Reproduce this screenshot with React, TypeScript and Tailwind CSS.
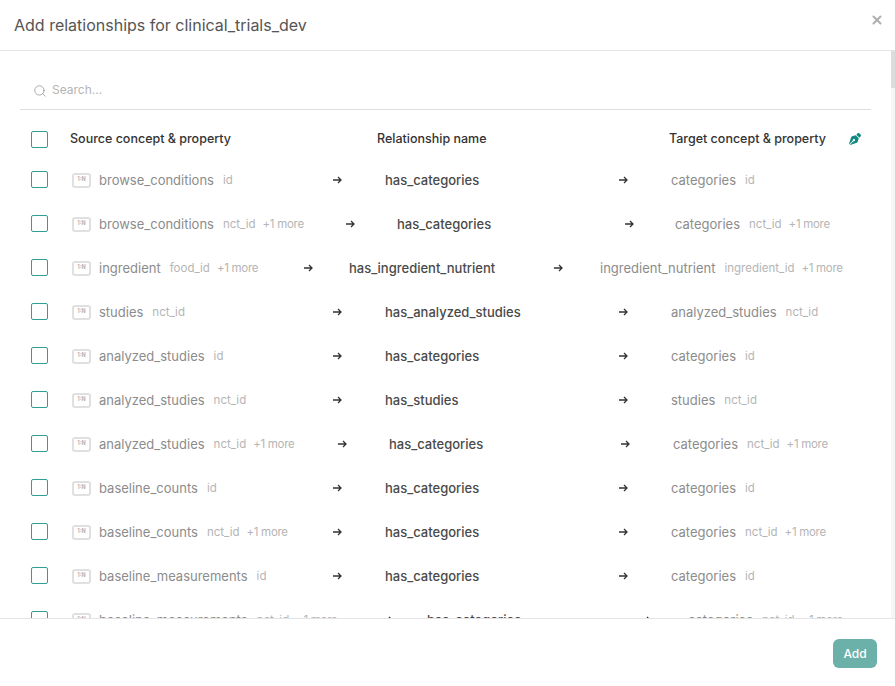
import { Search, X } from "lucide-react";
import { FaPenNib } from "react-icons/fa";

type Row = {
  src: string;
  srcProp: string;
  more?: boolean;
  name: string;
  tgt: string;
  tgtProp: string;
  tgtMore?: boolean;
  c1: string;
  c2: string;
  c3: string;
  c4: string;
};

const base = { c1: "w-[261px]", c2: "w-[52px]", c3: "w-[234px]", c4: "w-[52px]" };

const rows: Row[] = [
  { src: "browse_conditions", srcProp: "id", name: "has_categories", tgt: "categories", tgtProp: "id", ...base },
  { src: "browse_conditions", srcProp: "nct_id", more: true, name: "has_categories", tgt: "categories", tgtProp: "nct_id", tgtMore: true, c1: "w-[274px]", c2: "w-[51px]", c3: "w-[228px]", c4: "w-[50px]" },
  { src: "ingredient", srcProp: "food_id", more: true, name: "has_ingredient_nutrient", tgt: "ingredient_nutrient", tgtProp: "ingredient_id", tgtMore: true, c1: "w-[232px]", c2: "w-[45px]", c3: "w-[205px]", c4: "w-[46px]" },
  { src: "studies", srcProp: "nct_id", name: "has_analyzed_studies", tgt: "analyzed_studies", tgtProp: "nct_id", ...base },
  { src: "analyzed_studies", srcProp: "id", name: "has_categories", tgt: "categories", tgtProp: "id", ...base },
  { src: "analyzed_studies", srcProp: "nct_id", name: "has_studies", tgt: "studies", tgtProp: "nct_id", ...base },
  { src: "analyzed_studies", srcProp: "nct_id", more: true, name: "has_categories", tgt: "categories", tgtProp: "nct_id", tgtMore: true, c1: "w-[266px]", c2: "w-[51px]", c3: "w-[232px]", c4: "w-[52px]" },
  { src: "baseline_counts", srcProp: "id", name: "has_categories", tgt: "categories", tgtProp: "id", ...base },
  { src: "baseline_counts", srcProp: "nct_id", more: true, name: "has_categories", tgt: "categories", tgtProp: "nct_id", tgtMore: true, ...base },
  { src: "baseline_measurements", srcProp: "id", name: "has_categories", tgt: "categories", tgtProp: "id", ...base },
  { src: "baseline_measurements", srcProp: "nct_id", more: true, name: "has_categories", tgt: "categories", tgtProp: "nct_id", tgtMore: true, c1: "w-[312px]", c2: "w-[43px]", c3: "w-[215px]", c4: "w-[46px]" },
];

function Arrow() {
  return (
    <svg width="9" height="8" viewBox="0 0 9 8" fill="none" stroke="#333333" strokeWidth="1.3">
      <path d="M0 4H8M5 1l3 3-3 3" />
    </svg>
  );
}

function Meta({ prop, more }: { prop: string; more?: boolean }) {
  return (
    <>
      <span className="ml-[9px] translate-y-px text-[11.5px] text-[#b5b5b5]">{prop}</span>
      {more && <span className="ml-[7px] translate-y-px text-[11.5px] text-[#b5b5b5] tracking-[-0.3px]">+1 more</span>}
    </>
  );
}

function RowView({ r }: { r: Row }) {
  return (
    <div className="flex h-[44px] shrink-0 items-start pl-[11px]">
      <div className="mt-[13px] h-[17px] w-[17px] shrink-0 rounded-[2px] border border-current bg-white text-[#2f9e94]" />
      <div className="ml-[24px] flex h-full items-center whitespace-nowrap">
        <div className={`${r.c1} flex items-center`}>
          <div className="flex h-[15px] w-[19px] shrink-0 items-center justify-center rounded-[3px] border-2 border-[#e0e0e0] text-[5.5px] font-bold leading-none text-[#b5b5b5]">
            1:N
          </div>
          <span className="ml-[8px] translate-y-px text-[13px] text-[#8c8c8c]">{r.src}</span>
          <Meta prop={r.srcProp} more={r.more} />
        </div>
        <div className={`${r.c2} flex items-center`}>
          <Arrow />
        </div>
        <div className={`${r.c3} translate-y-px text-[13px] font-medium text-[#4a4a4a]`}>{r.name}</div>
        <div className={`${r.c4} flex items-center`}>
          <Arrow />
        </div>
        <div className="flex items-center">
          <span className="translate-y-px text-[13px] text-[#8c8c8c]">{r.tgt}</span>
          <Meta prop={r.tgtProp} more={r.tgtMore} />
        </div>
      </div>
    </div>
  );
}

export default function App() {
  return (
    <div className="flex h-[686px] w-[895px] flex-col overflow-hidden bg-white font-['Inter','Liberation_Sans',sans-serif]">
      <header className="flex h-[51px] shrink-0 items-start justify-between border-b border-[#e4e4e4] pl-[14px] pr-[11px]">
        <h1 className="mt-[15px] text-[16px] leading-5 font-normal text-[#555555]">Add relationships for clinical_trials_dev</h1>
        <X size={14} strokeWidth={3.5} className="mt-[13px] text-[#b0b0b0]" />
      </header>
      <div className="flex min-h-0 flex-1">
        <main className="flex min-w-0 flex-1 flex-col overflow-hidden pl-[20px] pr-[20px] pt-[22px]">
          <div className="flex h-[37px] shrink-0 items-center border-b border-[#dedede] pl-[13px]">
            <Search size={14} strokeWidth={1.25} className="text-[#8c8c8c]" />
            <span className="ml-[5px] -translate-y-px text-[12px] text-[#b5b5b5]">Search...</span>
          </div>
          <div className="mt-[10px] flex h-[38px] shrink-0 items-start pl-[11px]">
            <div className="mt-[11px] h-[17px] w-[17px] shrink-0 rounded-[2px] border border-current bg-white text-[#2f9e94]" />
            <div className="ml-[22px] flex h-full items-center text-[12.5px] font-medium whitespace-nowrap text-[#333333]">
              <div className="w-[307px]">Source concept &amp; property</div>
              <div className="w-[292px]">Relationship name</div>
              <div className="w-[180px]">Target concept &amp; property</div>
              <FaPenNib size={12} className="text-[#0f8a80]" />
            </div>
          </div>
          {rows.map((r, i) => (
            <RowView key={i} r={r} />
          ))}
        </main>
        <aside className="w-[4px] shrink-0 bg-[#f5f5f5]">
          <div className="h-[37px] w-full bg-[#dcdcdc]" />
        </aside>
      </div>
      <footer className="flex h-[68px] shrink-0 items-start justify-end border-t border-[#e4e4e4] pr-[18px] pt-[20px]">
        <button className="flex h-[29px] w-[44px] items-center justify-center rounded-[6px] bg-[#6bb0a9] text-[12px] font-medium text-white">
          Add
        </button>
      </footer>
    </div>
  );
}
